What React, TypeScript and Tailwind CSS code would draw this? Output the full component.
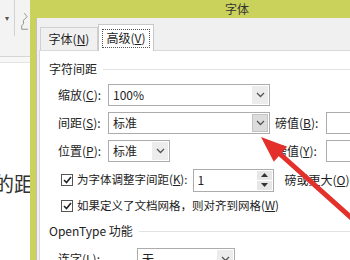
import React from "react";

const F = { fontFamily: '"Noto Sans CJK SC", "Noto Sans", sans-serif' };

function Chevron() {
  return (
    <svg width="9" height="6" viewBox="0 0 9 6">
      <path d="M1 1 L4.5 4.5 L8 1" fill="none" stroke="#555" strokeWidth="1.3" />
    </svg>
  );
}

function Select({ w, value, hover }: { w: number; value: string; hover?: boolean }) {
  return (
    <div
      className="h-[22px] flex items-stretch border border-[#acacac] bg-white"
      style={{ width: w }}
    >
      <div className="flex-1 flex items-center pl-[4px] text-[12px] text-[#222]">{value}</div>
      <div
        className={`w-[16px] m-[1px] flex items-center justify-center ${
          hover ? "bg-[#dcdcdc] border border-[#c4c4c4]" : "bg-[#ececec]"
        }`}
      >
        <Chevron />
      </div>
    </div>
  );
}

function Check({ label }: { label: React.ReactNode }) {
  return (
    <div className="flex items-center gap-[4px] text-[11.5px] text-[#222]">
      <div className="w-[12px] h-[12px] border border-[#555] bg-white flex items-center justify-center">
        <svg width="9" height="8" viewBox="0 0 9 8">
          <path d="M1 4 L3.5 6.5 L8 1" fill="none" stroke="#222" strokeWidth="1.6" />
        </svg>
      </div>
      <span>{label}</span>
    </div>
  );
}

export default function App() {
  return (
    <div className="relative w-[350px] h-[260px] overflow-hidden bg-white flex" style={F}>
      {/* Word document behind */}
      <div className="w-[30px] shrink-0 flex flex-col">
        <div className="h-[57px] bg-[#f3f3f3] border-b border-[#d6d6d6] relative flex">
          <div className="w-[17px] border-r border-[#d2d2d2] h-[36px] flex items-center justify-center text-[8px] text-[#555]">
            ▾
          </div>
          <svg width="12" height="30" viewBox="0 0 12 30" className="mt-[8px] ml-[4px]">
            <path d="M6 4 L9 8 L5 12 L5 16 L3 18 L3 22 L10 22" fill="none" stroke="#8a8a8a" strokeWidth="1" />
          </svg>
        </div>
        <div className="h-[6px] bg-[#f7f7f7] border-b border-[#e4e4e4]" />
        <div className="flex-1 bg-white pt-[110px] flex items-start">
          <span className="text-[20px] leading-[22px] text-[#333] ml-[-6px] whitespace-nowrap">的距</span>
          <div className="w-[1px] h-[20px] bg-[#666] ml-[1px] mt-[1px]" />
        </div>
      </div>

      {/* Dialog */}
      <div className="w-[414px] shrink-0 bg-[#cbd25b] flex flex-col">
        <div className="h-[22px] flex items-center justify-center text-[12px] text-[#333]">字体</div>
        <div className="flex-1 ml-[6px] bg-[#f0f0f0] border-l border-[#bfbfbf] flex flex-col pl-[2px]">
          {/* Tabs */}
          <div className="h-[32px] flex items-end pl-[1px]">
            <div className="h-[23px] w-[58px] border border-b-0 border-[#d0d0d0] bg-[#f0f0f0] flex items-center justify-center text-[12px] text-[#222]">
              字体(<span className="underline">N</span>)
            </div>
            <div className="h-[27px] w-[56px] border border-b-0 border-[#c8c8c8] bg-white flex items-center justify-center relative z-10 mb-[-1px]">
              <div className="border border-dotted border-[#555] px-[3px] h-[19px] flex items-center text-[12px] text-[#222]">
                高级(<span className="underline">V</span>)
              </div>
            </div>
          </div>
          {/* Panel */}
          <div className="flex-1 bg-white border-l border-t border-[#d9d9d9] flex flex-col text-[12px] text-[#222]">
            <div className="h-[22px] mt-[7px] flex items-center pl-[9px]">
              <span>字符间距</span>
              <div className="flex-1 h-[1px] bg-[#e2e2e2] ml-[6px]" />
            </div>
            <div className="h-[22px] mt-[4px] flex items-center pl-[18px]">
              <span className="w-[50px]">缩放(<span className="underline">C</span>):</span>
              <Select w={162} value="100%" />
            </div>
            <div className="h-[22px] mt-[6px] flex items-center pl-[18px]">
              <span className="w-[50px]">间距(<span className="underline">S</span>):</span>
              <Select w={162} value="标准" hover />
              <span className="ml-[5px] w-[51px]">磅值(<span className="underline">B</span>):</span>
              <div className="w-[60px] h-[22px] border border-[#acacac] bg-white" />
            </div>
            <div className="h-[22px] mt-[6px] flex items-center pl-[18px]">
              <span className="w-[50px]">位置(<span className="underline">P</span>):</span>
              <Select w={62} value="标准" />
              <span className="ml-[105px] w-[51px]">磅值(<span className="underline">Y</span>):</span>
              <div className="w-[60px] h-[22px] border border-[#acacac] bg-white" />
            </div>
            <div className="h-[22px] mt-[7px] flex items-center pl-[21px]">
              <Check label={<>为字体调整字间距(<span className="underline">K</span>):</>} />
              <div className="ml-[6px] w-[81px] h-[23px] border border-[#acacac] bg-white flex">
                <div className="flex-1 flex items-center pl-[3px]">1</div>
                <div className="w-[15px] m-[1px] flex flex-col gap-[1px]">
                  <div className="flex-1 bg-[#e6e6e6] flex items-center justify-center">
                    <svg width="7" height="4" viewBox="0 0 7 4"><path d="M0 4 L3.5 0 L7 4Z" fill="#333" /></svg>
                  </div>
                  <div className="flex-1 bg-[#e6e6e6] flex items-center justify-center">
                    <svg width="7" height="4" viewBox="0 0 7 4"><path d="M0 0 L3.5 4 L7 0Z" fill="#333" /></svg>
                  </div>
                </div>
              </div>
              <span className="ml-[10px] whitespace-nowrap">磅或更大(<span className="underline">O</span>)</span>
            </div>
            <div className="h-[22px] mt-[4px] flex items-center pl-[21px] whitespace-nowrap">
              <Check label={<>如果定义了文档网格，则对齐到网格(<span className="underline">W</span>)</>} />
            </div>
            <div className="h-[22px] mt-[3px] flex items-center pl-[9px]">
              <span className="whitespace-nowrap">OpenType 功能</span>
              <div className="flex-1 h-[1px] bg-[#e2e2e2] ml-[6px]" />
            </div>
            <div className="h-[22px] mt-[6px] flex items-center pl-[18px]">
              <span className="w-[79px]">连字(<span className="underline">L</span>):</span>
              <Select w={98} value="无" />
            </div>
          </div>
        </div>
      </div>

      {/* Red annotation arrow */}
      <svg className="absolute left-0 top-0 pointer-events-none" width="350" height="260" viewBox="0 0 350 260">
        <line x1="280" y1="154" x2="356" y2="222" stroke="#e3302a" strokeWidth="5" />
        <polygon points="261,137 273.8,161.8 287.1,146.8" fill="#e3302a" />
      </svg>
    </div>
  );
}
